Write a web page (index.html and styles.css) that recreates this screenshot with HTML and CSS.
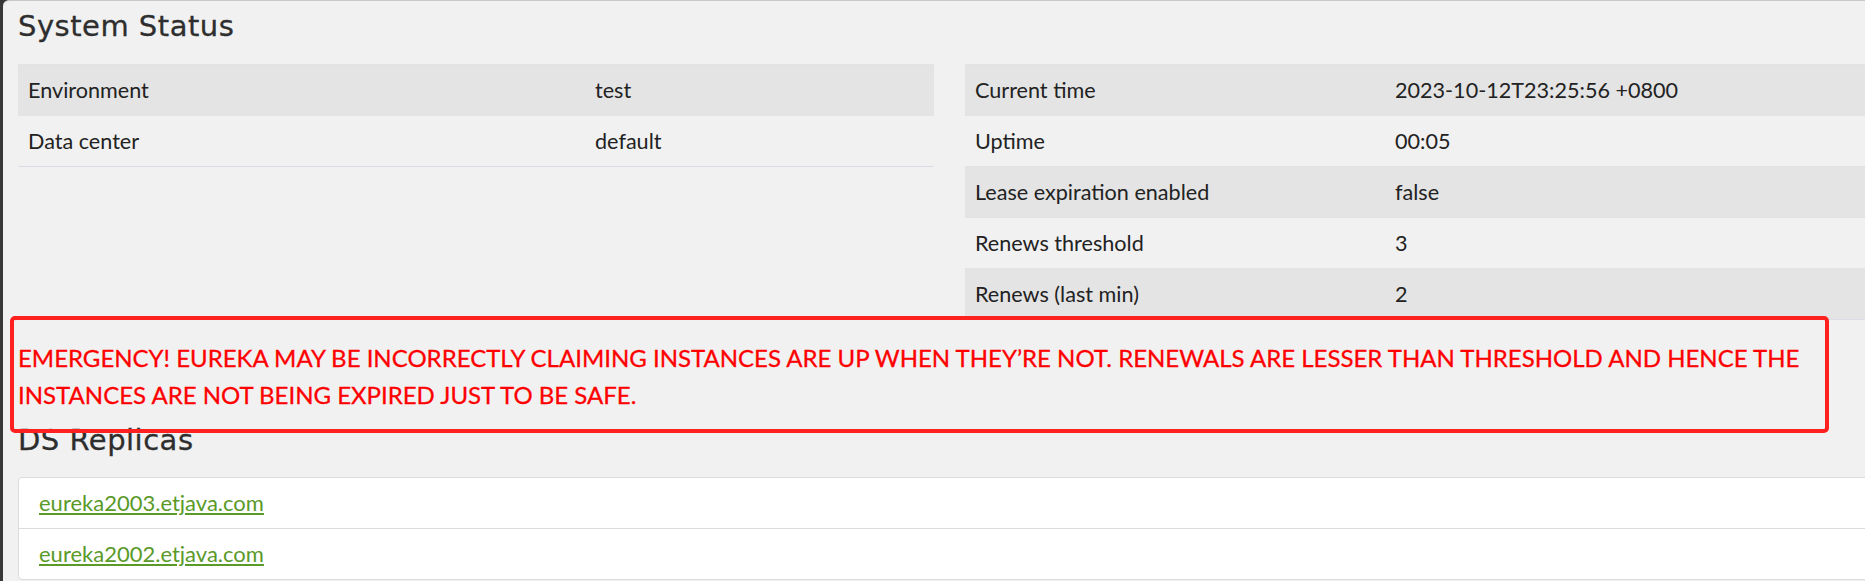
FILE: index.html
```html
<!DOCTYPE html>
<html>
<head>
<meta charset="utf-8">
<title>Eureka</title>
<link rel="stylesheet" href="styles.css">
</head>
<body>
<div class="page">
  <h2 class="heading">System Status</h2>
  <div class="columns">
    <table class="info info-left">
      <colgroup><col class="c-left"><col></colgroup>
      <tr class="odd"><td>Environment</td><td>test</td></tr>
      <tr><td>Data center</td><td>default</td></tr>
    </table>
    <table class="info info-right">
      <colgroup><col class="c-right"><col></colgroup>
      <tr class="odd"><td>Current time</td><td>2023-10-12T23:25:56 +0800</td></tr>
      <tr><td>Uptime</td><td>00:05</td></tr>
      <tr class="odd"><td>Lease expiration enabled</td><td>false</td></tr>
      <tr><td>Renews threshold</td><td>3</td></tr>
      <tr class="odd"><td>Renews (last min)</td><td>2</td></tr>
    </table>
  </div>
  <h4 class="emergency">EMERGENCY! EUREKA MAY BE INCORRECTLY CLAIMING INSTANCES ARE UP WHEN THEY’RE NOT. RENEWALS ARE LESSER THAN THRESHOLD AND HENCE THE<br>INSTANCES ARE NOT BEING EXPIRED JUST TO BE SAFE.</h4>
  <h2 class="heading heading-ds">DS Replicas</h2>
  <ul class="replicas">
    <li><a href="#">eureka2003.etjava.com</a></li>
    <li><a href="#">eureka2002.etjava.com</a></li>
  </ul>
  <div class="mark"></div>
</div>
</body>
</html>
```
FILE: styles.css
```css
* { box-sizing: border-box; }
html, body { margin: 0; padding: 0; overflow: hidden; height: 100%; }
body { background: #383838; }
.page {
  position: relative;
  margin-left: 3px;
  width: 1893px;
  min-height: 100%;
  background: #f1f1f1;
  border-top: 1px solid #c8c8c8;
  border-top-left-radius: 6px;
  padding: 0 15px;
  font-family: "Lato", "Liberation Sans", sans-serif;
  color: #222;
}
.heading {
  margin: 8px 0 0;
  font-family: "DejaVu Sans", sans-serif;
  font-weight: normal;
  font-size: 29px;
  letter-spacing: 0.5px;
  line-height: 34px;
  color: #2e2e2e;
  -webkit-text-stroke: 0.3px #2e2e2e;
}
.columns {
  display: grid;
  grid-template-columns: 916px 916px;
  column-gap: 31px;
  align-items: start;
  margin-top: 21px;
}
.info {
  width: 100%;
  border-collapse: collapse;
  table-layout: fixed;
  font-size: 21.6px;
  border-bottom: 1px solid #dcdce4;
}
.c-left { width: 567px; }
.c-right { width: 420px; }
.info td {
  padding: 10px 10px;
  line-height: 30px;
  border-top: 1px solid #e2e2e6;
  white-space: nowrap;
}
.info tr.odd td { background: #e4e4e4; }
.emergency {
  margin: 19px 0 0;
  font-size: 24px;
  line-height: 37px;
  font-weight: normal;
  color: #ff0000;
  white-space: nowrap;
  -webkit-text-stroke: 0.3px #ff0000;
}
.heading-ds { margin-top: 10px; }
.replicas {
  list-style: none;
  margin: 20px 0 0;
  padding: 0;
  background: #fff;
  border: 1px solid #dcdcdc;
  border-radius: 4px;
}
.replicas li {
  padding: 10px 20px;
  line-height: 30px;
  font-size: 22px;
  border-top: 1px solid #dcdcdc;
}
.replicas li:first-child { border-top: none; }
.replicas a { color: #5a9a28; text-decoration: underline; }
.mark {
  position: absolute;
  left: 7px;
  top: 315px;
  width: 1819px;
  height: 117px;
  border: 4px solid #ff2020;
  border-radius: 5px;
  pointer-events: none;
}
```
